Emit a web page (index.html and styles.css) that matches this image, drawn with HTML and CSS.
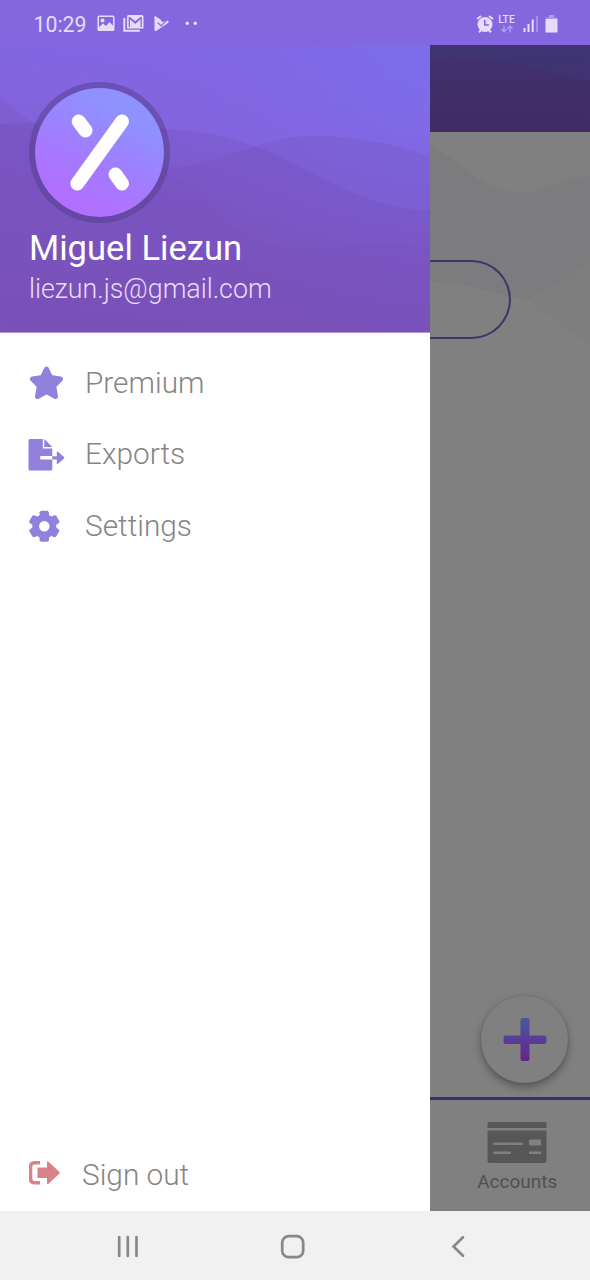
FILE: index.html
```html
<!DOCTYPE html>
<html lang="en">
<head>
<meta charset="utf-8">
<title>Menu</title>
<link rel="stylesheet" href="styles.css">
</head>
<body>
<div class="phone">
  <header class="status">
    <span class="time">10:29</span>
    <svg class="notices" width="104" height="20" viewBox="0 0 104 20">
      <path fill-rule="evenodd" d="M2 1.500h14q1.500 0 1.500 1.500v12.500q0 1.500-1.500 1.500H2Q.5 17 .5 15.500V3Q.5 1.500 2 1.500zM2 13l4-3.500 3 2.500 3.500-4 3.500 3.500V3H2zM5.500 4.500a2 2 0 1 0 .1 0z"/>
      <path d="M27.300 4v12.700h15.500" fill="none" stroke="#e6dcfa" stroke-width="2"/>
      <path fill-rule="evenodd" d="M31.500 1h13.500q1.500 0 1.500 1.500V14.500H30v-12q0-1.500 1.500-1.500zM31.700 3v10h1.300V5.300l5.200 4.700 5.300-4.700V13h1.300V3h-1.300l-5.300 4.300L33 3z"/>
      <path d="M58.500 2.200L63.500 5.500l1.700 2.500 5.300-1.500q2 1 .5 2.500L59.500 16.800q-2 .7-2-1V3q0-1.200 1-.8z"/>
      <path d="M60.700 8.700l3.500 3.300 5.600-6.200" fill="none" stroke="#8466df" stroke-width="1.200"/>
      <circle cx="90.300" cy="9.300" r="1.700"/><circle cx="98.300" cy="9.300" r="1.700"/>
    </svg>
    <div class="signals">
      <svg width="18" height="18" viewBox="0 0 18 18">
        <circle cx="9" cy="9.500" r="7.500"/>
        <path d="M1 4l4-3M17 4l-4-3M3 17.300l2.500-2.500M15 17.300l-2.500-2.500" fill="none" stroke="#e6dcfa" stroke-width="2"/>
        <path d="M8.800 5v5h4" fill="none" stroke="#8466df" stroke-width="1.600"/>
      </svg>
      <div class="lte"><span>LTE</span>
        <svg width="14" height="8" viewBox="0 0 14 8"><path d="M4 .5v6M1.500 4L4 6.700 6.500 4M10 7.500V1M7.500 3.700L10 1l2.500 2.700" fill="none" stroke="#b5a0ec" stroke-width="1.300"/></svg>
      </div>
      <svg class="bars" width="16" height="17" viewBox="0 0 16 17"><path d="M.5 13h2v4h-2zM4.500 9h2v8h-2zM8.700 4.500h2V17h-2z"/><path d="M13 1h2v16h-2z" opacity=".35"/></svg>
      <svg class="battery" width="13" height="18" viewBox="0 0 13 18"><path d="M4 0h5v2.500h3v2H1v-2h3z" opacity=".45"/><path d="M.5 4h12v13.500H.5z"/></svg>
    </div>
  </header>

  <div class="screen">
    <aside class="drawer">
      <section class="profile">
        <svg class="waves" viewBox="0 0 430 287" preserveAspectRatio="none">
          <defs>
            <linearGradient id="violet" gradientUnits="userSpaceOnUse" x1="240" y1="-30" x2="190" y2="287"><stop offset="0" stop-color="#8069e6"/><stop offset=".4" stop-color="#8363dc"/><stop offset="1" stop-color="#8157c2"/></linearGradient>
            <radialGradient id="sky" gradientUnits="userSpaceOnUse" cx="430" cy="0" r="280"><stop offset="0" stop-color="#7b6fed" stop-opacity=".75"/><stop offset="1" stop-color="#7f67e4" stop-opacity="0"/></radialGradient>
          </defs>
          <path d="M0 0h430v287H0z" fill="url(#violet)"/>
          <path d="M0 0h430v287H0z" fill="url(#sky)"/>
          <path d="M0 53C50 92 100 122 165 123c60-2 90-32 148-32 45 0 80 8 117 20v176H0z" fill="#6f4aaa" opacity=".2"/>
          <path d="M0 79C50 76 95 78 170 84c50 3 82 13 130 38 45 22 80 43 130 43v122H0z" fill="#6f47ab" opacity=".2"/>
          <path d="M150 118c65 24 67 85 155 85 60-2 70-10 125 0v84H22L0 272V79q90 10 150 39z" fill="#7248b0" opacity=".07"/>
        </svg>
        <div class="avatar">
          <svg width="129" height="129" viewBox="6 6 129 129"><g fill="none" stroke="#fff" stroke-width="14" stroke-linecap="round"><path d="M93 39.500L48.300 101.500M49.700 39.500L56.500 48.500M86.500 92.500L93 101.500"/></g></svg>
        </div>
        <h1 class="name">Miguel Liezun</h1>
        <p class="email">liezun.js@gmail.com</p>
      </section>
      <nav class="menu">
        <a class="item"><svg width="56" height="40" viewBox="0 0 56 40"><path d="M17.500 7L21.700 15.500 31.500 17 24.700 24 26.500 34.500 17.500 29.500 8.500 34.500 10.300 24 3.500 17 13.300 15.500z" stroke="#9180dc" stroke-width="5" stroke-linejoin="round"/></svg><span>Premium</span></a>
        <a class="item"><svg class="export" width="56" height="40" viewBox="0 0 56 40"><path d="M1.500 5h13v9.500H24V22H12v3.500h12V35q0 1.500-1.500 1.500h-21Q0 36.500 0 35V6.500Q0 5 1.500 5zM16 5l8 8h-8z"/><path d="M24 22.300h4.500v-4q0-1.500 1.200-.5l6 5.200q.8.800 0 1.600l-6 5.200q-1.200 1-1.200-.5v-3.700H24z"/></svg><span>Exports</span></a>
        <a class="item"><svg width="56" height="40" viewBox="0 0 56 40"><circle cx="15.300" cy="21.200" r="12"/><path id="tooth" d="M12 5.700h6.600l1.400 1.500v28l-1.400 1.500H12l-1.400-1.500v-28z"/><use href="#tooth" transform="rotate(60 15.300 21.200)"/><use href="#tooth" transform="rotate(120 15.300 21.200)"/><circle cx="15.300" cy="21.200" r="5.200" fill="#fff"/></svg><span>Settings</span></a>
      </nav>
      <a class="signout"><svg width="53" height="40" viewBox="0 0 53 40"><path d="M11 8.700H5.500q-4 0-4 4v12q0 4 4 4H11" fill="none" stroke="#d98288" stroke-width="3.600"/><path d="M8.500 13.500h9.500V8.500q0-2 1.500-.7l11 10.300q.8.700 0 1.400L19.500 29.700Q18 31 18 29.200V24H8.500z"/></svg><span>Sign out</span></a>
    </aside>

    <main class="app">
      <div class="topbar"><svg width="160" height="87" viewBox="0 0 160 87"><path d="M0 14Q60 10 110 24T160 35V0H0z" fill="#403775" opacity=".6"/></svg></div>
      <div class="content">
        <svg class="ripples" width="160" height="260" viewBox="0 0 160 260"><path d="M0 13C35 30 50 60 90 60c30 0 40-14 70-16v87L98 168 62 160Q30 150 0 150z" fill="#76757d" opacity=".4"/><path d="M98 168l62 46V131z" fill="#7b7b7e" opacity=".3"/></svg>
        <div class="pill"></div>
        <div class="fab"><svg width="44" height="44" viewBox="0 0 44 44"><defs><linearGradient id="plus" x1="0" y1="0" x2="0" y2="1"><stop offset="0" stop-color="#465c9c"/><stop offset=".5" stop-color="#5a3c98"/><stop offset="1" stop-color="#64258a"/></linearGradient></defs><path d="M19.500 0h5q2 0 2 2v15.500H41q2.500 0 2.500 2v4q0 2.500-2.500 2.500H26.500v15q0 2-2 2h-5q-2 0-2-2V26H3Q.5 26 .5 23.500v-4q0-2 2.500-2h14.500V2q0-2 2-2z" fill="url(#plus)"/></svg></div>
      </div>
      <div class="tab">
        <svg width="60" height="42" viewBox="0 0 60 42"><path d="M2 0h56q1.500 0 1.500 1.500V6H.5V1.500Q.5 0 2 0zM.5 8.500h59v30q0 2.500-2.500 2.500H3Q.5 41 .5 38.500z" fill="#575757"/><path d="M7 20.500h28q1 0 1 1.300T35 23H7q-1 0-1-1.200t1-1.300zM7 29.500h16q1 0 1 1.300T23 32H7q-1 0-1-1.200t1-1.300zM43 17.500h10q1 0 1 1v4q0 1-1 1H43q-1 0-1-1v-4q0-1 1-1zM42 29.500h12V32H42z" fill="#808080"/></svg>
        <span>Accounts</span>
      </div>
    </main>
  </div>

  <footer class="keys">
    <svg width="590" height="69" viewBox="0 0 590 69" fill="none" stroke="#888" stroke-width="2.700" stroke-linecap="round"><path d="M119.200 26v19M127.800 26v19M136.500 26v19"/><rect x="282.200" y="25.200" width="21" height="21" rx="6.500"/><path d="M463 26.200L453.500 35.500l9.500 9.300"/></svg>
  </footer>
</div>
</body>
</html>
```

FILE: styles.css
```css
* { box-sizing: border-box; }
body { margin: 0; font-family: Roboto, "Liberation Sans", sans-serif; }
svg { display: block; flex: none; }
.phone { width: 590px; height: 1280px; display: flex; flex-direction: column; overflow: hidden; }

.status { height: 45px; flex: none; display: flex; align-items: center; padding: 0 32.500px 0 33.500px; background: #8466df; color: #e6dcfa; fill: #e6dcfa; }
.time { width: 63px; font-size: 21.300px; line-height: 24px; padding-top: 4px; }
.notices { margin-top: 2px; }
.signals { margin-left: auto; display: flex; align-items: center; padding-top: 2px; }
.lte { width: 20px; margin-left: 3px; margin-right: 1px; display: flex; flex-direction: column; align-items: center; font-size: 10.300px; line-height: 10px; font-weight: 500; }
.bars { margin-left: 5px; }
.battery { margin-left: 6px; }

.screen { flex: 1; display: flex; min-height: 0; }
.drawer { width: 430.400px; flex: none; display: flex; flex-direction: column; background: #fff; }
.profile { height: 287.500px; flex: none; position: relative; padding: 37px 29px 0; color: #fff; }
.waves { position: absolute; inset: 0; width: 100%; height: 100%; }
.avatar { position: relative; width: 141px; height: 141px; border: 6px solid rgba(82, 60, 135, .48); border-radius: 50%; background: linear-gradient(28deg, #b46dff 12%, #a47aff 42%, #8f91ff 76%) padding-box; }
.name { position: relative; margin: 5px 0 0; font-size: 34.600px; line-height: 40px; font-weight: 400; white-space: nowrap; }
.email { position: relative; margin: 2px 0 0; font-size: 26.750px; line-height: 38px; font-weight: 300; color: #eadcf8; white-space: nowrap; }
.menu { padding: 14px 29px 0; fill: #9180dc; }
.item, .signout { display: flex; align-items: center; font-size: 29.800px; font-weight: 300; color: #858585; }
.item { height: 71.500px; }
.export { transform: translateX(-.7px); }
.signout { height: 74px; margin-top: auto; padding-left: 29px; fill: #d98288; }

.app { flex: 1; min-width: 0; display: flex; flex-direction: column; background: #808080; }
.topbar { height: 87px; flex: none; background: linear-gradient(#403270, #412b66); }
.content { position: relative; flex: 1; padding-top: 128px; }
.ripples { position: absolute; top: 0; left: 0; }
.pill { position: relative; width: 80.600px; height: 79px; border: 2px solid #42316c; border-left: 0; border-radius: 0 40px 40px 0; }
.fab { position: absolute; right: 22px; bottom: 14px; width: 87px; height: 87px; border-radius: 50%; background: #808080; display: grid; place-items: center; box-shadow: 0 4px 8px rgba(0, 0, 0, .34), 0 0 3px rgba(0, 0, 0, .07); }
.tab { height: 114px; flex: none; border-top: 3px solid #3f2c6d; padding: 22px 0 0 14px; display: flex; flex-direction: column; align-items: center; font-size: 19px; line-height: 22px; color: #505050; }
.tab span { margin-top: 7px; }
.keys { height: 69px; flex: none; background: #f1f1f1; }
```
